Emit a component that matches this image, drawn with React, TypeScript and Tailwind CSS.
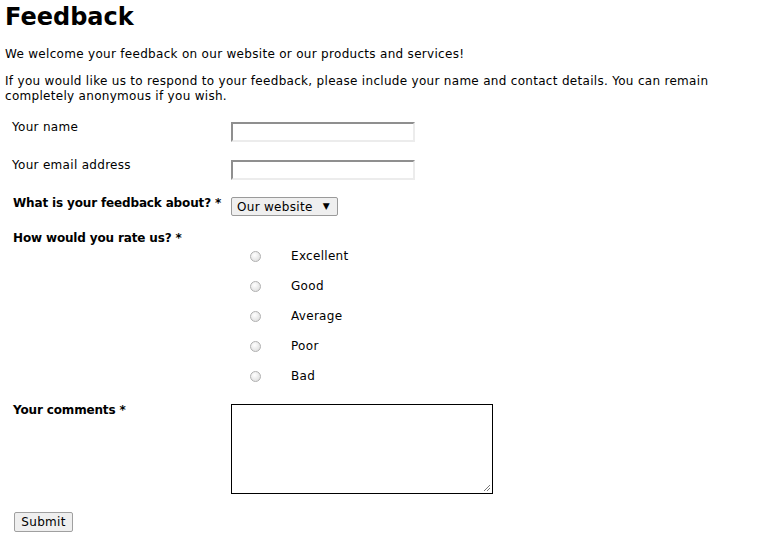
import React from "react";

const font = { fontFamily: '"DejaVu Sans", Verdana, sans-serif' };

function Radio() {
  return (
    <span className="inline-block h-[11px] w-[11px] rounded-full border border-[#b0b0b0] bg-[radial-gradient(circle_at_40%_35%,#ffffff,#d8d8d8)]" />
  );
}

function TextInput() {
  return (
    <div className="h-[20px] w-[184px] border-2 border-t-[#8f8f8f] border-l-[#8f8f8f] border-b-[#ececec] border-r-[#ececec] bg-white" />
  );
}

export default function App() {
  const ratings = ["Excellent", "Good", "Average", "Poor", "Bad"];
  return (
    <div className="min-h-[548px] w-[760px] bg-white text-[12px] tracking-[0.3px] text-black" style={font}>
      <div className="px-[5px] pt-[3px]">
        <h1 className="text-[24px] font-bold leading-[28px] tracking-normal">Feedback</h1>
        <p className="mt-[16px] leading-[15px]">We welcome your feedback on our website or our products and services!</p>
        <p className="mt-[12px] leading-[15px]">
          If you would like us to respond to your feedback, please include your name and contact details. You can remain completely anonymous if you wish.
        </p>
      </div>
      <div className="pl-[12px] pt-[16px]">
        <div className="flex h-[38px] items-start">
          <div className="w-[219px] leading-[15px]">Your name</div>
          <div className="mt-[2px]"><TextInput /></div>
        </div>
        <div className="flex h-[38px] items-start">
          <div className="w-[219px] leading-[15px]">Your email address</div>
          <div className="mt-[2px]"><TextInput /></div>
        </div>
        <div className="flex h-[35px] items-start">
          <div className="w-[219px] pl-px font-bold leading-[15px] tracking-[-0.15px]">What is your feedback about? *</div>
          <div className="mt-[1px]">
            <div className="flex h-[19px] w-[107px] items-center justify-between rounded-[2px] border border-[#9a9a9a] bg-[#efefef] pl-[5px] pr-[7px]">
              <span>Our website</span>
              <span className="text-[9px]">▼</span>
            </div>
          </div>
        </div>
        <div className="flex h-[172px] items-start">
          <div className="w-[219px] pl-px font-bold leading-[15px] tracking-[-0.15px]">How would you rate us? *</div>
          <div className="mt-[18px] flex flex-col gap-[15px]">
            {ratings.map((r) => (
              <div key={r} className="flex h-[15px] items-center">
                <span className="ml-[19px] flex w-[41px] items-center"><Radio /></span>
                <span className="leading-[15px]">{r}</span>
              </div>
            ))}
          </div>
        </div>
        <div className="flex items-start">
          <div className="w-[219px] pl-px font-bold leading-[15px] tracking-[-0.15px]">Your comments *</div>
          <div className="mt-[1px]">
            <div className="relative h-[90px] w-[262px] border border-black bg-white">
              <svg className="absolute bottom-[1px] right-[1px]" width="9" height="9" viewBox="0 0 9 9">
                <path d="M8 2 L2 8 M8 5 L5 8" stroke="#777" strokeWidth="1" />
              </svg>
            </div>
          </div>
        </div>
      </div>
      <div className="pl-[14px] pt-[18px]">
        <button className="h-[20px] w-[59px] rounded-[2px] border border-[#a0a0a0] bg-[#efefef] text-[12px] leading-[18px]">Submit</button>
      </div>
    </div>
  );
}
